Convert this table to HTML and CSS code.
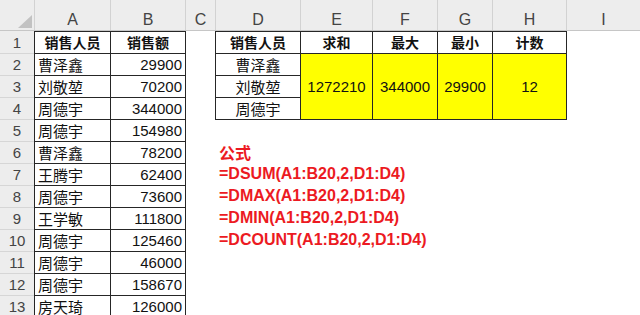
FILE: index.html
```html
<!DOCTYPE html>
<html lang="zh-CN">
  <head>
    <meta charset="UTF-8" />
    <meta name="viewport" content="width=device-width, initial-scale=1.0" />
    <title>DSUM / DMAX / DMIN / DCOUNT</title>
    <link rel="stylesheet" href="styles.css">
  </head>
  <body>
    <div class="sheet">
      <!-- column letters -->
      <div class="col-head">
        <div class="corner"><span class="corner-mark"></span></div>
        <div class="col-a">A</div>
        <div class="col-b">B</div>
        <div class="col-c">C</div>
        <div class="col-d">D</div>
        <div class="col-e">E</div>
        <div class="col-f">F</div>
        <div class="col-g">G</div>
        <div class="col-h">H</div>
        <div class="col-i">I</div>
      </div>

      <div class="sheet-body">
        <div class="row-head">
          <div>1</div><div>2</div><div>3</div><div>4</div><div>5</div>
          <div>6</div><div>7</div><div>8</div><div>9</div><div>10</div>
          <div>11</div><div>12</div><div>13</div>
        </div>

        <!-- source data A1:B13 -->
        <div class="table sales">
          <div class="cell head">销售人员</div><div class="cell head">销售额</div>
          <div class="cell name">曹泽鑫</div><div class="cell num">29900</div>
          <div class="cell name">刘敬堃</div><div class="cell num">70200</div>
          <div class="cell name">周德宇</div><div class="cell num">344000</div>
          <div class="cell name">周德宇</div><div class="cell num">154980</div>
          <div class="cell name">曹泽鑫</div><div class="cell num">78200</div>
          <div class="cell name">王腾宇</div><div class="cell num">62400</div>
          <div class="cell name">周德宇</div><div class="cell num">73600</div>
          <div class="cell name">王学敏</div><div class="cell num">111800</div>
          <div class="cell name">周德宇</div><div class="cell num">125460</div>
          <div class="cell name">周德宇</div><div class="cell num">46000</div>
          <div class="cell name">周德宇</div><div class="cell num">158670</div>
          <div class="cell name">房天琦</div><div class="cell num">126000</div>
        </div>

        <div class="right-side">
          <!-- criteria + results D1:H4 -->
          <div class="table summary">
            <div class="cell head">销售人员</div>
            <div class="cell head">求和</div>
            <div class="cell head">最大</div>
            <div class="cell head">最小</div>
            <div class="cell head">计数</div>
            <div class="cell center">曹泽鑫</div>
            <div class="cell result">1272210</div>
            <div class="cell result">344000</div>
            <div class="cell result">29900</div>
            <div class="cell result">12</div>
            <div class="cell center">刘敬堃</div>
            <div class="cell center">周德宇</div>
          </div>

          <div class="formulas">
            <div class="formula-title">公式</div>
            <div>=DSUM(A1:B20,2,D1:D4)</div>
            <div>=DMAX(A1:B20,2,D1:D4)</div>
            <div>=DMIN(A1:B20,2,D1:D4)</div>
            <div>=DCOUNT(A1:B20,2,D1:D4)</div>
          </div>
        </div>
      </div>
    </div>
  </body>
</html>
```

FILE: styles.css
```css
* {
  margin: 0;
  padding: 0;
  box-sizing: border-box;
}

body {
  width: 640px;
  height: 315px;
  overflow: hidden;
  background-color: #fff;
  font-family: "Liberation Sans", "Noto Sans CJK SC", sans-serif;
  font-size: 15px;
  color: #111;
}

/* column header bar */
.col-head {
  display: grid;
  grid-template-columns: 35px 76px 75px 30px 85px 72px 65px 55px 74px 1fr;
  height: 31px;
  background-color: #ededed;
  border-bottom: 1px solid #c6c6c6;
}

.col-head div {
  border-right: 1px solid #d2d2d2;
  text-align: center;
  padding-top: 10px;
  line-height: 20px;
  font-size: 16px;
  color: #444;
}

.col-head .corner {
  display: flex;
  justify-content: flex-end;
  align-items: flex-end;
  padding: 0 2px 2px 0;
}

.corner-mark {
  width: 14px;
  height: 13px;
  background-color: #c2c2c2;
  clip-path: polygon(100% 0, 100% 100%, 0 100%);
}

.col-head .col-i {
  border-right: none;
}

.sheet-body {
  display: flex;
  align-items: flex-start;
}

/* row numbers */
.row-head {
  width: 34px;
  padding-top: 1px;
  background-color: #ededed;
}

.row-head div {
  height: 22px;
  border-bottom: 1px solid #d6d6d6;
  text-align: center;
  line-height: 21px;
  color: #444;
}

/* bordered ranges: the dark gap is the cell border */
.table {
  display: grid;
  grid-auto-rows: 21px;
  gap: 1px;
  padding: 1px;
  background-color: #262626;
}

.cell {
  background-color: #fff;
  line-height: 21px;
  white-space: nowrap;
  overflow: hidden;
}

.cell.head {
  font-family: "Noto Sans CJK SC", sans-serif;
  font-weight: bold;
  font-size: 14px;
  text-align: center;
}

.sales {
  grid-template-columns: 75px 74px;
}

.name {
  font-family: "Noto Sans CJK SC", sans-serif;
  padding-left: 3px;
}

.num {
  text-align: right;
  padding-right: 3px;
}

.right-side {
  margin-left: 29px;
}

.summary {
  grid-template-columns: 84px 71px 64px 54px 73px;
}

.center {
  font-family: "Noto Sans CJK SC", sans-serif;
  text-align: center;
}

.result {
  grid-row: span 3;
  background-color: #ffff00;
  display: flex;
  align-items: center;
  justify-content: center;
}

.formulas {
  margin-top: 21px;
  padding-left: 4px;
  line-height: 22px;
  font-size: 16px;
  font-weight: bold;
  color: #ec1a22;
}

.formula-title {
  font-family: "Noto Sans CJK SC", sans-serif;
}
```
